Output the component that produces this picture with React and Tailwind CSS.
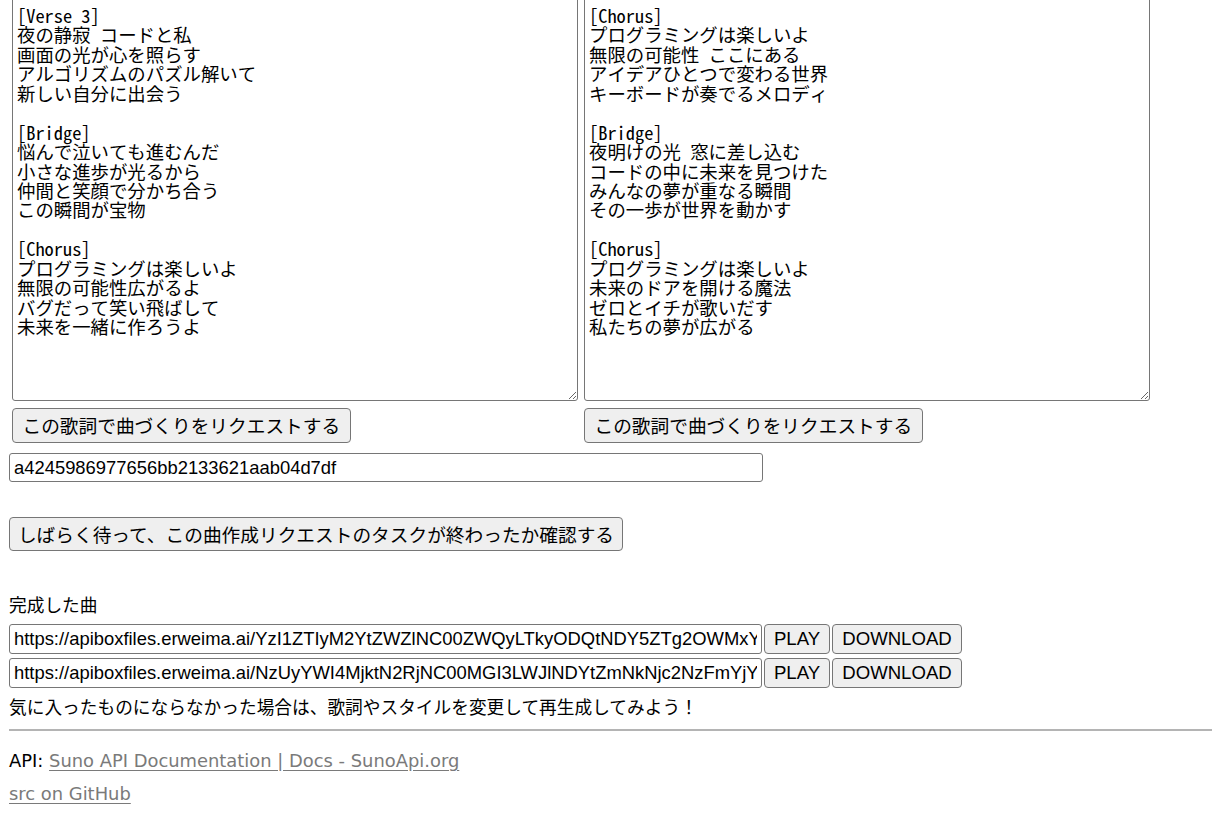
import React from "react";

const left = `[Verse 3]
夜の静寂 コードと私
画面の光が心を照らす
アルゴリズムのパズル解いて
新しい自分に出会う

[Bridge]
悩んで泣いても進むんだ
小さな進歩が光るから
仲間と笑顔で分かち合う
この瞬間が宝物

[Chorus]
プログラミングは楽しいよ
無限の可能性広がるよ
バグだって笑い飛ばして
未来を一緒に作ろうよ`;

const right = `[Chorus]
プログラミングは楽しいよ
無限の可能性 ここにある
アイデアひとつで変わる世界
キーボードが奏でるメロディ

[Bridge]
夜明けの光 窓に差し込む
コードの中に未来を見つけた
みんなの夢が重なる瞬間
その一歩が世界を動かす

[Chorus]
プログラミングは楽しいよ
未来のドアを開ける魔法
ゼロとイチが歌いだす
私たちの夢が広がる`;

const btnBase =
  "bg-[#efefef] border border-[#767676] rounded-[4px] text-black leading-none whitespace-nowrap";
const btnJa = `${btnBase} text-[18.7px] [font-family:'Noto_Sans_CJK_JP',sans-serif]`;
const btnEn = `${btnBase} text-[18.6px] [font-family:'Liberation_Sans',sans-serif]`;
const inp =
  "bg-white border border-[#767676] rounded-[3px] text-black text-[18.4px] px-[4px] outline-none [font-family:'Liberation_Sans',sans-serif]";

function Column({ text }) {
  return (
    <div className="flex flex-col items-start w-[566px]">
      <textarea
        readOnly
        value={text}
        className="w-[566px] h-[421px] bg-white border border-[#767676] rounded-[3px] pt-[25px] pl-[4px] pr-[2px] text-black text-[18.4px] leading-[19.44px] outline-none resize [font-family:'Noto_Sans_Mono_CJK_JP','DejaVu_Sans_Mono','Noto_Sans_CJK_JP',monospace]"
      />
      <button className={`${btnJa} mt-[7px] h-[35px] px-[9.5px]`}>
        この歌詞で曲づくりをリクエストする
      </button>
    </div>
  );
}

function SongRow({ url }) {
  return (
    <div className="flex gap-[2px] h-[30px]">
      <input readOnly value={url} className={`${inp} w-[753px] h-[30px]`} />
      <button className={`${btnEn} w-[66px] h-[30px]`}>PLAY</button>
      <button className={`${btnEn} w-[130px] h-[30px]`}>DOWNLOAD</button>
    </div>
  );
}

export default function App() {
  return (
    <div className="w-[1220px] h-[816px] overflow-hidden bg-white text-black px-[9px] text-[17.7px] [font-family:'Noto_Sans_CJK_JP',sans-serif]">
      <div className="flex gap-[6px] ml-[3px] -mt-[20px]">
        <Column text={left} />
        <Column text={right} />
      </div>
      <input
        readOnly
        value="a4245986977656bb2133621aab04d7df"
        className={`${inp} mt-[10px] w-[754px] h-[29px] block`}
      />
      <button className={`${btnJa} mt-[35px] h-[34px] w-[614px] px-0 block`}>
        しばらく待って、この曲作成リクエストのタスクが終わったか確認する
      </button>
      <div className="mt-[40px] h-[26px] leading-[26px]">完成した曲</div>
      <div className="mt-[7px] flex flex-col gap-[4px]">
        <SongRow url="https://apiboxfiles.erweima.ai/YzI1ZTIyM2YtZWZlNC00ZWQyLTkyODQtNDY5ZTg2OWMxYjM3.mp3" />
        <SongRow url="https://apiboxfiles.erweima.ai/NzUyYWI4MjktN2RjNC00MGI3LWJlNDYtZmNkNjc2NzFmYjY5.mp3" />
      </div>
      <div className="mt-[5px] h-[26px] leading-[26px]">
        気に入ったものにならなかった場合は、歌詞やスタイルを変更して再生成してみよう！
      </div>
      <hr className="mt-[10px] border-0 border-t-2 border-[#b4b4b4] w-[1203px]" />
      <div className="mt-[17px] h-[26px] leading-[26px] [font-family:'DejaVu_Sans','Noto_Sans_CJK_JP',sans-serif] text-[17.9px]">
        API:{" "}
        <a href="#" className="text-[#7a7a7a] underline underline-offset-[3px]">
          Suno API Documentation | Docs - SunoApi.org
        </a>
      </div>
      <div className="mt-[7px] h-[26px] leading-[26px] [font-family:'DejaVu_Sans','Noto_Sans_CJK_JP',sans-serif] text-[17.9px]">
        <a href="#" className="text-[#7a7a7a] underline underline-offset-[3px]">
          src on GitHub
        </a>
      </div>
    </div>
  );
}
